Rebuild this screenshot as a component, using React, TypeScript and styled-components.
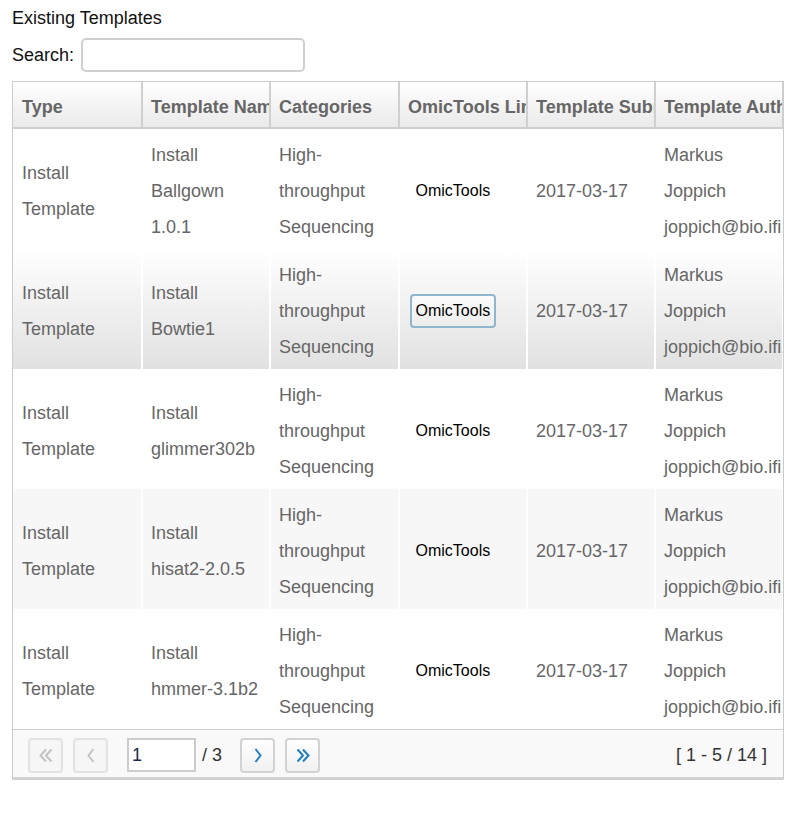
import React from "react";
import styled, { createGlobalStyle, css } from "styled-components";

const GlobalStyle = createGlobalStyle`
  html, body { margin: 0; padding: 0; background: #fff; }
  body { font-family: "Liberation Sans", Arial, sans-serif; font-size: 18px; color: #222; }
`;

const Page = styled.div`
  padding: 8px 0 0 12px;
  width: 772px;
`;

const Title = styled.div`
  line-height: 21px;
  color: #111;
`;

const SearchRow = styled.div`
  display: flex;
  align-items: center;
  gap: 7px;
  margin-top: 9px;
  color: #111;
`;

const SearchInput = styled.input`
  box-sizing: border-box;
  width: 224px;
  height: 34px;
  border: 2px solid #cfcfcf;
  border-radius: 5px;
  font: inherit;
  padding: 0 6px;
  outline: none;
`;

const Grid = styled.div`
  margin-top: 9px;
  border: 1px solid #cccccc;
  border-bottom: 3px solid #d2d2d2;
  overflow: hidden;
  width: 770px;
`;

const Table = styled.table`
  table-layout: fixed;
  border-collapse: separate;
  border-spacing: 0;
  width: 771px;
`;

const HeadCell = styled.th`
  height: 40px;
  padding: 5px 0 0 8px;
  text-align: left;
  font-weight: bold;
  color: #666;
  white-space: nowrap;
  overflow: hidden;
  background: linear-gradient(#ffffff, #eaeaea);
  border-right: 2px solid #d0d0d0;
  border-bottom: 2px solid #cfcfcf;
  vertical-align: middle;
  &:first-child { padding-left: 9px; }
`;

const Row = styled.tr<{ $striped?: boolean; $hover?: boolean }>`
  background: ${(p) => (p.$striped ? "#f7f7f7" : "#ffffff")};
  ${(p) =>
    p.$hover &&
    css`
      background: linear-gradient(#ffffff, #e1e1e1);
    `}
`;

const Cell = styled.td`
  padding: 8px 8px 4px;
  line-height: 36px;
  color: #666;
  vertical-align: middle;
  border-right: 2px solid #fff;
  &:first-child { padding-left: 9px; }
`;

const NoWrap = styled.span`
  white-space: nowrap;
`;

const LinkButton = styled.button<{ $active?: boolean }>`
  font-family: "Liberation Sans", Arial, sans-serif;
  font-size: 16px;
  color: #000;
  height: 34px;
  padding: 1px 3.5px 0;
  margin: 0 0 2px 2px;
  border-radius: 4px;
  border: 2px solid transparent;
  background: transparent;
  cursor: pointer;
  ${(p) =>
    p.$active &&
    css`
      border-color: #8fb5cf;
      background: linear-gradient(#fbfbfb, #ededed);
    `}
`;

const Footer = styled.div`
  display: flex;
  align-items: center;
  border-top: 1px solid #cfcfcf;
  background: #f9f9f9;
  height: 48px;
  padding: 3px 16px 0 15px;
  box-sizing: border-box;
`;

const PageButton = styled.button<{ $disabled?: boolean; $gap?: number }>`
  width: 35px;
  height: 35px;
  box-sizing: border-box;
  margin-left: ${(p) => p.$gap ?? 0}px;
  border-radius: 4px;
  display: flex;
  align-items: center;
  justify-content: center;
  padding: 0;
  border: 2px solid ${(p) => (p.$disabled ? "#e2e2e2" : "#d2d2d2")};
  background: ${(p) => (p.$disabled ? "#f6f6f6" : "linear-gradient(#ffffff, #f0f0f0)")};
  color: ${(p) => (p.$disabled ? "#c3c3c3" : "#1f7fc4")};
`;

const PageInput = styled.input`
  box-sizing: border-box;
  width: 69px;
  height: 34px;
  margin-left: 19px;
  border: 2px solid #cccccc;
  font: inherit;
  color: #1a2a4a;
  padding: 0 3px;
  background: #fff;
  outline: none;
`;

const PageTotal = styled.span`
  margin-left: 6px;
  margin-right: 18px;
  color: #333;
`;

const Range = styled.span`
  margin-left: auto;
  color: #333;
`;

const Chevron = ({ double, dir }: { double?: boolean; dir: "l" | "r" }) => {
  const d = double
    ? dir === "l"
      ? "M7 1.5 L1.5 7.5 L7 13.5 M12.5 1.5 L7 7.5 L12.5 13.5"
      : "M1.5 1.5 L7 7.5 L1.5 13.5 M7 1.5 L12.5 7.5 L7 13.5"
    : dir === "l"
    ? "M6.5 1 L1.5 7.5 L6.5 14"
    : "M1.5 1 L6.5 7.5 L1.5 14";
  const w = double ? 14 : 8;
  return (
    <svg width={w} height={15} viewBox={`0 0 ${w} 15`} fill="none">
      <path d={d} stroke="currentColor" strokeWidth={2} strokeLinejoin="miter" />
    </svg>
  );
};

const columns = [
  { label: "Type", width: 130 },
  { label: "Template Name", width: 128 },
  { label: "Categories", width: 129 },
  { label: "OmicTools Link", width: 128 },
  { label: "Template Submission Date", width: 128 },
  { label: "Template Author", width: 128 },
];

const rows = ["Ballgown 1.0.1", "Bowtie1", "glimmer302b", "hisat2-2.0.5", "hmmer-3.1b2"];

export default function App() {
  return (
    <Page>
      <GlobalStyle />
      <Title>Existing Templates</Title>
      <SearchRow>
        <span>Search:</span>
        <SearchInput />
      </SearchRow>
      <Grid>
        <Table>
          <colgroup>
            {columns.map((c) => (
              <col key={c.label} style={{ width: c.width }} />
            ))}
          </colgroup>
          <thead>
            <tr>
              {columns.map((c) => (
                <HeadCell key={c.label}>{c.label}</HeadCell>
              ))}
            </tr>
          </thead>
          <tbody>
            {rows.map((name, i) => (
              <Row key={name} $striped={i % 2 === 1} $hover={i === 1}>
                <Cell>Install Template</Cell>
                <Cell>
                  Install {name.includes(" ") ? name : <NoWrap>{name}</NoWrap>}
                </Cell>
                <Cell>High-throughput Sequencing</Cell>
                <Cell>
                  <LinkButton $active={i === 1}>OmicTools</LinkButton>
                </Cell>
                <Cell>2017-03-17</Cell>
                <Cell>Markus Joppich joppich@bio.ifi.lmu.de</Cell>
              </Row>
            ))}
          </tbody>
        </Table>
        <Footer>
          <PageButton $disabled>
            <Chevron double dir="l" />
          </PageButton>
          <PageButton $disabled $gap={10}>
            <Chevron dir="l" />
          </PageButton>
          <PageInput defaultValue="1" />
          <PageTotal>/ 3</PageTotal>
          <PageButton>
            <Chevron dir="r" />
          </PageButton>
          <PageButton $gap={10}>
            <Chevron double dir="r" />
          </PageButton>
          <Range>[ 1 - 5 / 14 ]</Range>
        </Footer>
      </Grid>
    </Page>
  );
}
